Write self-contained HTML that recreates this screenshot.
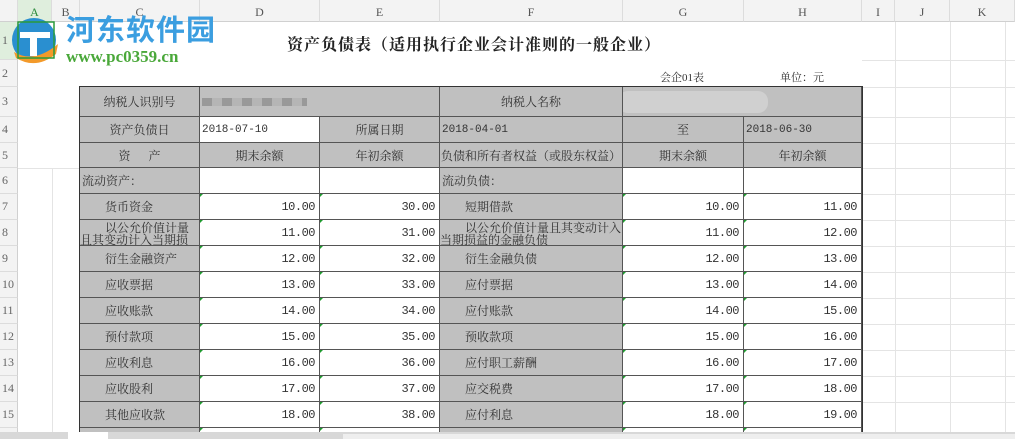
<!DOCTYPE html>
<html><head><meta charset="utf-8"><style>
*{margin:0;padding:0;box-sizing:border-box}
body{width:1015px;height:439px;overflow:hidden;background:#fff;position:relative;font-family:"Liberation Serif","Noto Serif CJK SC",serif;font-size:12px;color:#333}
.hd{position:absolute;top:0;height:22px;background:#f3f3f3;border-right:1px solid #dcdcdc;border-bottom:1px solid #d0d0d0;text-align:center;line-height:24px;color:#555;font-size:12px}
.rh{position:absolute;left:0;width:18px;background:#f3f3f3;border-bottom:1px solid #dcdcdc;border-right:1px solid #d0d0d0;color:#666;font-size:12px;padding-left:2px;display:flex;align-items:center}
.c{position:absolute;border-right:1px solid #555;border-bottom:1px solid #555;display:flex;align-items:center;white-space:nowrap;overflow:hidden}
.g{background:#c0c0c0}
.w{background:#fff}
.ctr{justify-content:center}
.num{justify-content:flex-end;padding-right:4px;font-family:"Liberation Mono",monospace;font-size:12px;letter-spacing:-0.5px}
.gl{position:absolute;background:#e4e4e4}
.lbl{padding-left:25px}
.tri:before{content:"";position:absolute;left:0;top:0;border-top:3px solid #1e9b2e;border-right:3px solid transparent}
</style></head><body>
<!-- grid lines right side -->
<div class="gl" style="left:895px;top:22px;width:1px;height:410px"></div>
<div class="gl" style="left:950px;top:22px;width:1px;height:410px"></div>
<div class="gl" style="left:1005px;top:22px;width:1px;height:410px"></div>
<div class="gl" style="left:52px;top:168px;width:1px;height:264px"></div>
<div class="gl" style="left:862px;top:60px;width:153px;height:1px"></div>
<div class="gl" style="left:862px;top:87px;width:153px;height:1px"></div>
<div class="gl" style="left:862px;top:117px;width:153px;height:1px"></div>
<div class="gl" style="left:862px;top:143px;width:153px;height:1px"></div>
<div class="gl" style="left:862px;top:168px;width:153px;height:1px"></div>
<div class="gl" style="left:862px;top:194px;width:153px;height:1px"></div>
<div class="gl" style="left:862px;top:220px;width:153px;height:1px"></div>
<div class="gl" style="left:862px;top:246px;width:153px;height:1px"></div>
<div class="gl" style="left:862px;top:272px;width:153px;height:1px"></div>
<div class="gl" style="left:862px;top:298px;width:153px;height:1px"></div>
<div class="gl" style="left:862px;top:324px;width:153px;height:1px"></div>
<div class="gl" style="left:862px;top:350px;width:153px;height:1px"></div>
<div class="gl" style="left:862px;top:376px;width:153px;height:1px"></div>
<div class="gl" style="left:862px;top:402px;width:153px;height:1px"></div>
<div class="gl" style="left:0;top:168px;width:80px;height:1px"></div>

<!-- column headers -->
<div class="hd" style="left:0;width:18px"></div>
<div class="hd" style="left:18px;width:34px;background:#dfeedd;color:#2a8a3a">A</div>
<div class="hd" style="left:52px;width:28px">B</div>
<div class="hd" style="left:80px;width:120px">C</div>
<div class="hd" style="left:200px;width:120px">D</div>
<div class="hd" style="left:320px;width:120px">E</div>
<div class="hd" style="left:440px;width:183px">F</div>
<div class="hd" style="left:623px;width:121px">G</div>
<div class="hd" style="left:744px;width:118px">H</div>
<div class="hd" style="left:862px;width:33px">I</div>
<div class="hd" style="left:895px;width:55px">J</div>
<div class="hd" style="left:950px;width:65px">K</div>

<!-- row headers -->
<div class="rh" style="top:22px;height:38px;background:#dfeedd">1</div>
<div class="rh" style="top:60px;height:27px">2</div>
<div class="rh" style="top:87px;height:30px">3</div>
<div class="rh" style="top:117px;height:26px">4</div>
<div class="rh" style="top:143px;height:25px">5</div>
<div class="rh" style="top:168px;height:26px">6</div>
<div class="rh" style="top:194px;height:26px">7</div>
<div class="rh" style="top:220px;height:26px">8</div>
<div class="rh" style="top:246px;height:26px">9</div>
<div class="rh" style="top:272px;height:26px">10</div>
<div class="rh" style="top:298px;height:26px">11</div>
<div class="rh" style="top:324px;height:26px">12</div>
<div class="rh" style="top:350px;height:26px">13</div>
<div class="rh" style="top:376px;height:26px">14</div>
<div class="rh" style="top:402px;height:26px">15</div>
<div class="rh" style="top:428px;height:11px"></div>

<!-- logo -->
<svg style="position:absolute;left:6px;top:14px" width="58" height="52" viewBox="0 0 58 52">
<circle cx="28" cy="26" r="22" fill="#2a8fd0"/>
<path d="M8 38 Q28 50 52 30 L50 40 Q30 56 10 44Z" fill="#f39a2a"/>
<rect x="14" y="18" width="30" height="6" fill="#fff"/>
<rect x="24" y="18" width="7" height="24" fill="#fff"/>
<rect x="12" y="8" width="36" height="36" fill="none" stroke="#2a9a3a" stroke-width="1.5"/>
</svg>
<div style="position:absolute;left:66px;top:12px;font-family:'Noto Sans CJK SC',sans-serif;font-weight:bold;font-size:29px;color:#3b9ee0;letter-spacing:1px;line-height:32px">河东软件园</div>
<div style="position:absolute;left:66px;top:48px;font-family:'Liberation Serif',serif;font-weight:bold;font-size:17px;color:#4aa83a;line-height:18px">www.pc0359.cn</div>

<!-- title -->
<div style="position:absolute;left:287px;top:32px;font-size:16px;font-weight:bold;color:#222;letter-spacing:1px">资产负债表（适用执行企业会计准则的一般企业）</div>
<div style="position:absolute;left:660px;top:69px;font-size:11px">会企01表</div>
<div style="position:absolute;left:780px;top:69px;font-size:11px">单位：元</div>

<!-- table border -->
<div style="position:absolute;left:79px;top:86px;width:784px;height:353px;border-left:1px solid #333;border-top:1px solid #333;border-right:1px solid #333"></div>

<!-- row3 -->
<div class="c g ctr" style="left:80px;top:87px;width:120px;height:30px">纳税人识别号</div>
<div class="c g" style="left:200px;top:87px;width:240px;height:30px"><div style="margin-left:2px;width:105px;height:8px;background:repeating-linear-gradient(90deg,#999 0 10px,#b5b5b5 10px 20px)"></div></div>
<div class="c g ctr" style="left:440px;top:87px;width:183px;height:30px">纳税人名称</div>
<div class="c g" style="left:623px;top:87px;width:239px;height:30px"><div style="width:150px;height:22px;margin-left:-5px;background:#d0d0d0;border-radius:10px"></div></div>
<!-- row4 -->
<div class="c g ctr" style="left:80px;top:117px;width:120px;height:26px">资产负债日</div>
<div class="c w" style="left:200px;top:117px;width:120px;height:26px;padding-left:2px;font-family:'Liberation Mono',monospace;font-size:11px">2018-07-10</div>
<div class="c g ctr" style="left:320px;top:117px;width:120px;height:26px">所属日期</div>
<div class="c g" style="left:440px;top:117px;width:183px;height:26px;padding-left:2px;font-family:'Liberation Mono',monospace;font-size:11px">2018-04-01</div>
<div class="c g ctr" style="left:623px;top:117px;width:121px;height:26px">至</div>
<div class="c g" style="left:744px;top:117px;width:118px;height:26px;padding-left:2px;font-family:'Liberation Mono',monospace;font-size:11px">2018-06-30</div>
<!-- row5 -->
<div class="c g ctr" style="left:80px;top:143px;width:120px;height:25px">资&nbsp;&nbsp;&nbsp;&nbsp;&nbsp;&nbsp;产</div>
<div class="c g ctr" style="left:200px;top:143px;width:120px;height:25px">期末余额</div>
<div class="c g ctr" style="left:320px;top:143px;width:120px;height:25px">年初余额</div>
<div class="c g ctr" style="left:440px;top:143px;width:183px;height:25px">负债和所有者权益（或股东权益）</div>
<div class="c g ctr" style="left:623px;top:143px;width:121px;height:25px">期末余额</div>
<div class="c g ctr" style="left:744px;top:143px;width:118px;height:25px">年初余额</div>
<!-- row6 -->
<div class="c g" style="left:80px;top:168px;width:120px;height:26px;padding-left:2px">流动资产：</div>
<div class="c w" style="left:200px;top:168px;width:120px;height:26px"></div>
<div class="c w" style="left:320px;top:168px;width:120px;height:26px"></div>
<div class="c g" style="left:440px;top:168px;width:183px;height:26px;padding-left:2px">流动负债：</div>
<div class="c w" style="left:623px;top:168px;width:121px;height:26px"></div>
<div class="c w" style="left:744px;top:168px;width:118px;height:26px"></div>

<!-- rows 7-15 -->
<div class="c g lbl" style="left:80px;top:194px;width:120px;height:26px">货币资金</div>
<div class="c w num tri" style="left:200px;top:194px;width:120px;height:26px">10.00</div>
<div class="c w num tri" style="left:320px;top:194px;width:120px;height:26px">30.00</div>
<div class="c g lbl" style="left:440px;top:194px;width:183px;height:26px">短期借款</div>
<div class="c w num tri" style="left:623px;top:194px;width:121px;height:26px">10.00</div>
<div class="c w num tri" style="left:744px;top:194px;width:118px;height:26px">11.00</div>

<div class="c g" style="left:80px;top:220px;width:120px;height:26px;flex-direction:column;align-items:flex-start;justify-content:flex-start;line-height:12px;padding-top:2px"><span style="padding-left:25px">以公允价值计量</span><span>且其变动计入当期损</span></div>
<div class="c w num tri" style="left:200px;top:220px;width:120px;height:26px">11.00</div>
<div class="c w num tri" style="left:320px;top:220px;width:120px;height:26px">31.00</div>
<div class="c g" style="left:440px;top:220px;width:183px;height:26px;flex-direction:column;align-items:flex-start;justify-content:flex-start;line-height:12px;padding-top:2px"><span style="padding-left:25px">以公允价值计量且其变动计入</span><span>当期损益的金融负债</span></div>
<div class="c w num tri" style="left:623px;top:220px;width:121px;height:26px">11.00</div>
<div class="c w num tri" style="left:744px;top:220px;width:118px;height:26px">12.00</div>

<div class="c g lbl" style="left:80px;top:246px;width:120px;height:26px">衍生金融资产</div>
<div class="c w num tri" style="left:200px;top:246px;width:120px;height:26px">12.00</div>
<div class="c w num tri" style="left:320px;top:246px;width:120px;height:26px">32.00</div>
<div class="c g lbl" style="left:440px;top:246px;width:183px;height:26px">衍生金融负债</div>
<div class="c w num tri" style="left:623px;top:246px;width:121px;height:26px">12.00</div>
<div class="c w num tri" style="left:744px;top:246px;width:118px;height:26px">13.00</div>

<div class="c g lbl" style="left:80px;top:272px;width:120px;height:26px">应收票据</div>
<div class="c w num tri" style="left:200px;top:272px;width:120px;height:26px">13.00</div>
<div class="c w num tri" style="left:320px;top:272px;width:120px;height:26px">33.00</div>
<div class="c g lbl" style="left:440px;top:272px;width:183px;height:26px">应付票据</div>
<div class="c w num tri" style="left:623px;top:272px;width:121px;height:26px">13.00</div>
<div class="c w num tri" style="left:744px;top:272px;width:118px;height:26px">14.00</div>

<div class="c g lbl" style="left:80px;top:298px;width:120px;height:26px">应收账款</div>
<div class="c w num tri" style="left:200px;top:298px;width:120px;height:26px">14.00</div>
<div class="c w num tri" style="left:320px;top:298px;width:120px;height:26px">34.00</div>
<div class="c g lbl" style="left:440px;top:298px;width:183px;height:26px">应付账款</div>
<div class="c w num tri" style="left:623px;top:298px;width:121px;height:26px">14.00</div>
<div class="c w num tri" style="left:744px;top:298px;width:118px;height:26px">15.00</div>

<div class="c g lbl" style="left:80px;top:324px;width:120px;height:26px">预付款项</div>
<div class="c w num tri" style="left:200px;top:324px;width:120px;height:26px">15.00</div>
<div class="c w num tri" style="left:320px;top:324px;width:120px;height:26px">35.00</div>
<div class="c g lbl" style="left:440px;top:324px;width:183px;height:26px">预收款项</div>
<div class="c w num tri" style="left:623px;top:324px;width:121px;height:26px">15.00</div>
<div class="c w num tri" style="left:744px;top:324px;width:118px;height:26px">16.00</div>

<div class="c g lbl" style="left:80px;top:350px;width:120px;height:26px">应收利息</div>
<div class="c w num tri" style="left:200px;top:350px;width:120px;height:26px">16.00</div>
<div class="c w num tri" style="left:320px;top:350px;width:120px;height:26px">36.00</div>
<div class="c g lbl" style="left:440px;top:350px;width:183px;height:26px">应付职工薪酬</div>
<div class="c w num tri" style="left:623px;top:350px;width:121px;height:26px">16.00</div>
<div class="c w num tri" style="left:744px;top:350px;width:118px;height:26px">17.00</div>

<div class="c g lbl" style="left:80px;top:376px;width:120px;height:26px">应收股利</div>
<div class="c w num tri" style="left:200px;top:376px;width:120px;height:26px">17.00</div>
<div class="c w num tri" style="left:320px;top:376px;width:120px;height:26px">37.00</div>
<div class="c g lbl" style="left:440px;top:376px;width:183px;height:26px">应交税费</div>
<div class="c w num tri" style="left:623px;top:376px;width:121px;height:26px">17.00</div>
<div class="c w num tri" style="left:744px;top:376px;width:118px;height:26px">18.00</div>

<div class="c g lbl" style="left:80px;top:402px;width:120px;height:26px">其他应收款</div>
<div class="c w num tri" style="left:200px;top:402px;width:120px;height:26px">18.00</div>
<div class="c w num tri" style="left:320px;top:402px;width:120px;height:26px">38.00</div>
<div class="c g lbl" style="left:440px;top:402px;width:183px;height:26px">应付利息</div>
<div class="c w num tri" style="left:623px;top:402px;width:121px;height:26px">18.00</div>
<div class="c w num tri" style="left:744px;top:402px;width:118px;height:26px">19.00</div>

<div class="c g" style="left:80px;top:428px;width:120px;height:11px"></div>
<div class="c w tri" style="left:200px;top:428px;width:120px;height:11px"></div>
<div class="c w tri" style="left:320px;top:428px;width:120px;height:11px"></div>
<div class="c g" style="left:440px;top:428px;width:183px;height:11px"></div>
<div class="c w tri" style="left:623px;top:428px;width:121px;height:11px"></div>
<div class="c w tri" style="left:744px;top:428px;width:118px;height:11px"></div>

<!-- bottom scroll bar -->
<div style="position:absolute;left:0;top:432px;width:1015px;height:7px;background:#d8d8d8"></div>
<div style="position:absolute;left:68px;top:432px;width:40px;height:7px;background:#fff"></div>
<div style="position:absolute;left:343px;top:434px;width:672px;height:5px;background:#eee"></div>
</body></html>
